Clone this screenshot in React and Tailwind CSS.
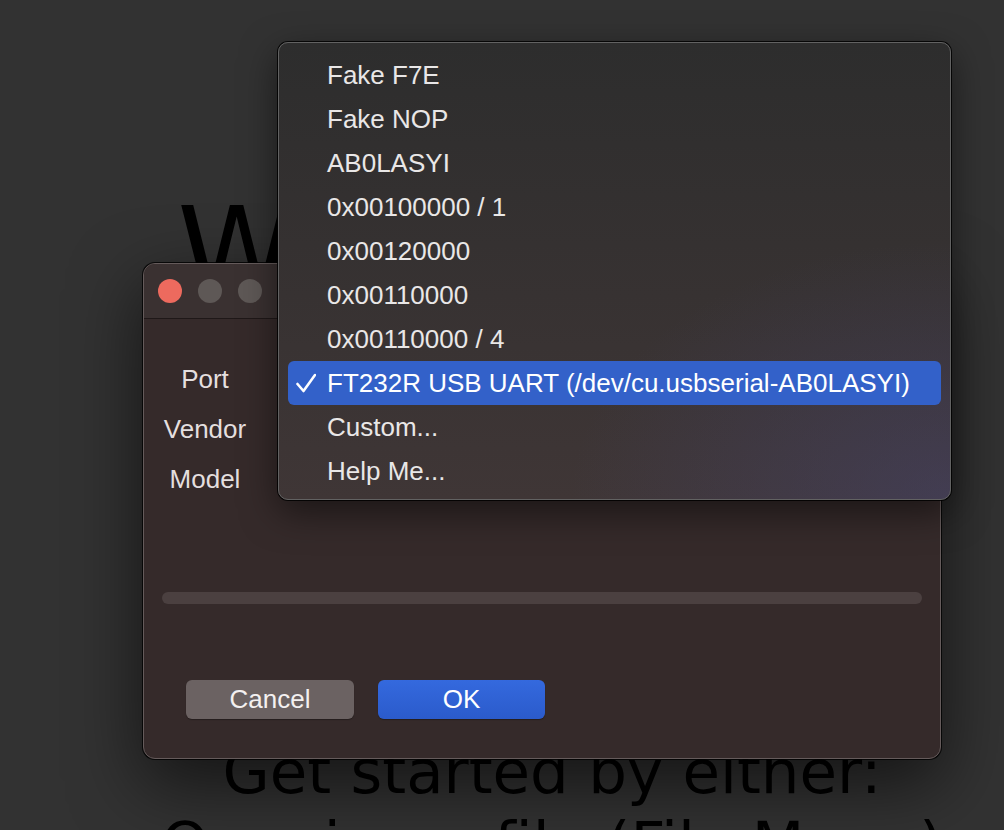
import React from 'react'

const ports = [
  'Fake F7E',
  'Fake NOP',
  'AB0LASYI',
  '0x00100000 / 1',
  '0x00120000',
  '0x00110000',
  '0x00110000 / 4',
  'FT232R USB UART (/dev/cu.usbserial-AB0LASYI)',
  'Custom...',
  'Help Me...',
]

const selected = 'FT232R USB UART (/dev/cu.usbserial-AB0LASYI)'

function Check() {
  return (
    <svg width="20" height="20" viewBox="0 0 20 20" className="ml-[8px]">
      <polyline points="1.5,11 7.5,18 19,2" fill="none" stroke="#ffffff" strokeWidth="2.6" strokeLinecap="round" strokeLinejoin="round" />
    </svg>
  )
}

function PortMenu() {
  return (
    <div className="absolute left-[278px] top-[42px] w-[673px] h-[458px] rounded-[10px] border border-[#626262] pt-[10px] pb-[8px] shadow-[0_0_0_1px_rgba(0,0,0,0.85),0_12px_36px_rgba(0,0,0,0.5)] bg-[radial-gradient(ellipse_at_bottom_right,rgba(70,68,110,0.5),transparent_40%),linear-gradient(to_bottom,#2d2d2d,#3f3636)]">
      {ports.map((p) => {
        const on = p === selected
        return (
          <div
            key={p}
            className={
              on
                ? 'mx-[9px] h-[44px] flex items-center rounded-[6px] bg-[#3361c9] text-white'
                : 'mx-[9px] h-[44px] flex items-center text-[#e9e7e7]'
            }
          >
            <div className="w-[39px] shrink-0 flex items-center">{on && <Check />}</div>
            <span className="text-[26px] whitespace-nowrap">{p}</span>
          </div>
        )
      })}
    </div>
  )
}

function PortDialog() {
  return (
    <div className="absolute left-[143px] top-[263px] w-[798px] h-[496px] rounded-[12px] border border-[#655b5b] bg-[#352a2a] flex flex-col shadow-[0_0_0_1px_rgba(0,0,0,0.8),0_24px_70px_rgba(0,0,0,0.6)]">
      {/* title bar */}
      <div className="h-[55px] shrink-0 flex items-center gap-[16px] pl-[14px] rounded-t-[11px] bg-[#3a3131] border-b border-[#1f1818]">
        <div className="w-[24px] h-[24px] rounded-full bg-[#ed6a5e]" />
        <div className="w-[24px] h-[24px] rounded-full bg-[#5e5856]" />
        <div className="w-[24px] h-[24px] rounded-full bg-[#5e5856]" />
      </div>

      <div className="flex flex-col pt-[35px]">
        <div className="w-[122px] flex flex-col text-center text-[26px] text-[#e4dfdf]">
          <div className="h-[50px] flex items-center justify-center">Port</div>
          <div className="h-[50px] flex items-center justify-center">Vendor</div>
          <div className="h-[50px] flex items-center justify-center">Model</div>
        </div>

        <div className="mt-[88px] mx-[18px] h-[12px] rounded-full bg-[#4b4040]" />

        <div className="mt-[76px] pl-[42px] flex gap-[24px]">
          <button className="w-[168px] h-[39px] rounded-[6px] bg-[#6b6262] text-[26px] text-[#f3f0f0] shadow-[0_1px_1px_rgba(0,0,0,0.3)]">
            Cancel
          </button>
          <button className="w-[167px] h-[39px] rounded-[6px] bg-[linear-gradient(to_bottom,#3469de,#2b5bcb)] text-[26px] text-white shadow-[0_1px_1px_rgba(0,0,0,0.3)]">
            OK
          </button>
        </div>
      </div>
    </div>
  )
}

export default function App() {
  return (
    <div
      className="relative w-full h-[830px] overflow-hidden bg-[#323232]"
      style={{ fontFamily: '"Liberation Sans", Arial, sans-serif' }}
    >
      {/* the app window behind the dialog */}
      <div className="pl-[100px] pt-[191px] text-center text-black" style={{ fontFamily: '"DejaVu Sans", sans-serif' }}>
        <h1 className="mr-[42px] text-[120px] leading-none whitespace-nowrap">Welcome to</h1>
        <p className="mt-[425px] text-[61px] leading-[72px]">Get started by either:</p>
        <p className="text-[61px] leading-[72px] whitespace-nowrap">Opening a file (File Menu)</p>
      </div>

      <PortDialog />
      <PortMenu />
    </div>
  )
}
